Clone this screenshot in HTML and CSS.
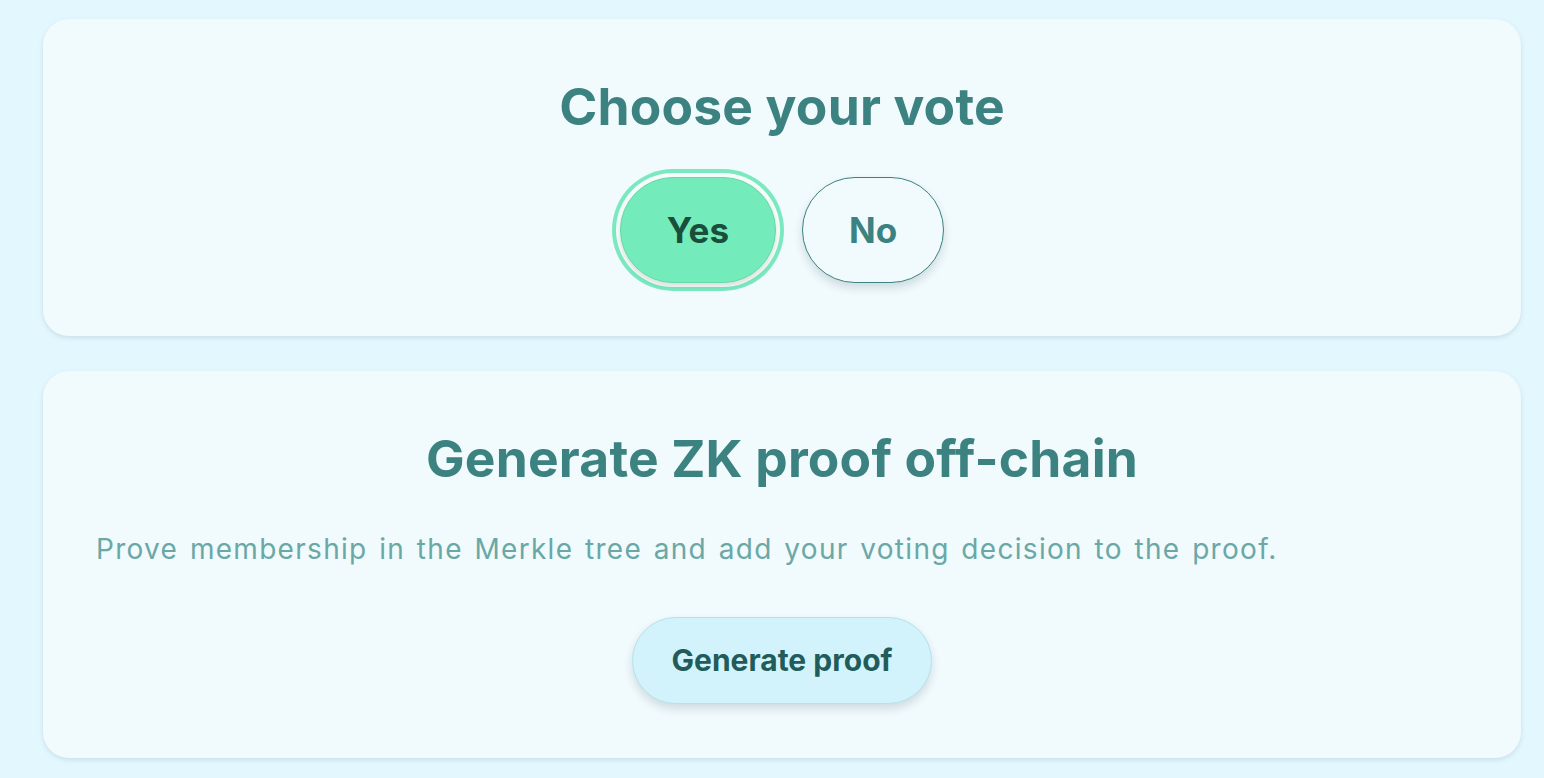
FILE: index.html
```html
<!DOCTYPE html>
<html lang="en">
<head>
<meta charset="utf-8">
<title>Vote</title>
<link rel="stylesheet" href="styles.css">
</head>
<body>
<main class="page">
  <section class="card">
    <h2 class="card-title">Choose your vote</h2>
    <div class="vote-options">
      <button class="vote-btn vote-yes" type="button">Yes</button>
      <button class="vote-btn vote-no" type="button">No</button>
    </div>
  </section>
  <section class="card card-proof">
    <h2 class="card-title">Generate ZK proof off-chain</h2>
    <p class="card-text">Prove membership in the Merkle tree and add your voting decision to the proof.</p>
    <div class="actions">
      <button class="proof-btn" type="button">Generate proof</button>
    </div>
  </section>
</main>
</body>
</html>
```
FILE: styles.css
```css
html, body {
  margin: 0;
  padding: 0;
}
body {
  background: #e3f7fe;
  font-family: "Inter", "Noto Sans", sans-serif;
}
.page {
  display: flex;
  flex-direction: column;
  gap: 35px;
  padding: 19px 23px 20px 43px;
}
.card {
  background: #f1fafd;
  border-radius: 26px;
  box-shadow: 0 2px 5px rgba(40, 90, 110, 0.14);
  padding: 57px 53px 53px;
  display: flex;
  flex-direction: column;
  align-items: stretch;
}
.card-proof {
  padding-bottom: 54px;
}
.card-title {
  margin: 0;
  text-align: center;
  font-size: 51.5px;
  line-height: 1.2;
  font-weight: 700;
  color: #3b8280;
  letter-spacing: 0.2px;
}
.vote-options {
  display: flex;
  justify-content: center;
  align-items: center;
  gap: 26px;
  margin-top: 39px;
}
.vote-btn {
  font-family: inherit;
  font-size: 35px;
  font-weight: 700;
  line-height: 42px;
  border-radius: 999px;
  cursor: pointer;
}
.vote-yes {
  padding: 31px 46px;
  background: #74ebbb;
  color: #1b4d3b;
  border: 1px solid #66d9aa;
  box-shadow: 0 3px 5px rgba(0, 0, 0, 0.12), 0 0 0 4px #f7fdfb, 0 0 0 8px #7ae9c0;
}
.vote-no {
  padding: 31px 46px;
  background: #f1fafd;
  color: #3b8280;
  border: 1.5px solid #3b8280;
  box-shadow: 0 5px 9px rgba(30, 70, 80, 0.16);
}
.card-text {
  margin: 39px 0 0;
  font-size: 28px;
  line-height: 40px;
  color: #6aa8a6;
  letter-spacing: 1.3px;
  word-spacing: 2.5px;
}
.actions {
  display: flex;
  justify-content: center;
  margin-top: 48px;
}
.proof-btn {
  font-family: inherit;
  font-size: 30px;
  font-weight: 700;
  line-height: 36px;
  color: #215c5a;
  background: #d2f3fc;
  border: 1.5px solid #b6e1eb;
  border-radius: 999px;
  padding: 24.5px 39px;
  box-shadow: 0 5px 9px rgba(30, 70, 80, 0.16);
  cursor: pointer;
}
```
